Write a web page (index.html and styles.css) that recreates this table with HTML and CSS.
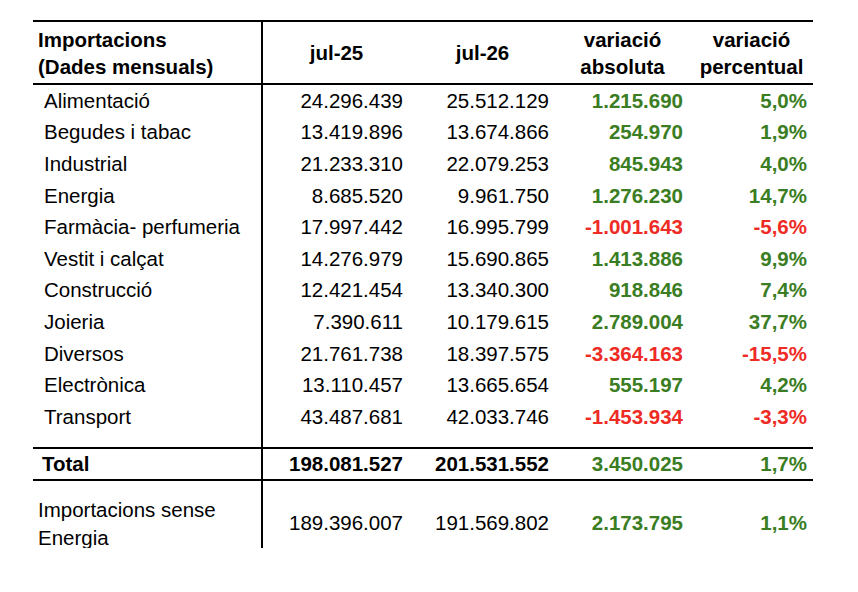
FILE: index.html
```html
<!DOCTYPE html>
<html lang="ca">
<head>
<meta charset="utf-8">
<link rel="stylesheet" href="styles.css">
</head>
<body>
<table class="tbl">
  <colgroup>
    <col class="c1"><col class="c2"><col class="c3"><col class="c4"><col class="c5">
  </colgroup>
  <thead>
    <tr class="head">
      <th class="lab">Importacions<br>(Dades mensuals)</th>
      <th>jul-25</th>
      <th>jul-26</th>
      <th>variació<br>absoluta</th>
      <th>variació<br>percentual</th>
    </tr>
  </thead>
  <tbody>
    <tr class="row"><td class="lab">Alimentació</td><td class="n">24.296.439</td><td class="n">25.512.129</td><td class="n g">1.215.690</td><td class="n g">5,0%</td></tr>
    <tr class="row"><td class="lab">Begudes i tabac</td><td class="n">13.419.896</td><td class="n">13.674.866</td><td class="n g">254.970</td><td class="n g">1,9%</td></tr>
    <tr class="row"><td class="lab">Industrial</td><td class="n">21.233.310</td><td class="n">22.079.253</td><td class="n g">845.943</td><td class="n g">4,0%</td></tr>
    <tr class="row"><td class="lab">Energia</td><td class="n">8.685.520</td><td class="n">9.961.750</td><td class="n g">1.276.230</td><td class="n g">14,7%</td></tr>
    <tr class="row"><td class="lab">Farmàcia- perfumeria</td><td class="n">17.997.442</td><td class="n">16.995.799</td><td class="n r">-1.001.643</td><td class="n r">-5,6%</td></tr>
    <tr class="row"><td class="lab">Vestit i calçat</td><td class="n">14.276.979</td><td class="n">15.690.865</td><td class="n g">1.413.886</td><td class="n g">9,9%</td></tr>
    <tr class="row"><td class="lab">Construcció</td><td class="n">12.421.454</td><td class="n">13.340.300</td><td class="n g">918.846</td><td class="n g">7,4%</td></tr>
    <tr class="row"><td class="lab">Joieria</td><td class="n">7.390.611</td><td class="n">10.179.615</td><td class="n g">2.789.004</td><td class="n g">37,7%</td></tr>
    <tr class="row"><td class="lab">Diversos</td><td class="n">21.761.738</td><td class="n">18.397.575</td><td class="n r">-3.364.163</td><td class="n r">-15,5%</td></tr>
    <tr class="row"><td class="lab">Electrònica</td><td class="n">13.110.457</td><td class="n">13.665.654</td><td class="n g">555.197</td><td class="n g">4,2%</td></tr>
    <tr class="row"><td class="lab">Transport</td><td class="n">43.487.681</td><td class="n">42.033.746</td><td class="n r">-1.453.934</td><td class="n r">-3,3%</td></tr>
    <tr class="spacer"><td class="lab"></td><td></td><td></td><td></td><td></td></tr>
    <tr class="total"><td class="lab">Total</td><td class="n">198.081.527</td><td class="n">201.531.552</td><td class="n g">3.450.025</td><td class="n g">1,7%</td></tr>
    <tr class="last"><td class="lab"><div class="wrap">Importacions sense<br>Energia</div></td><td class="n">189.396.007</td><td class="n">191.569.802</td><td class="n g">2.173.795</td><td class="n g">1,1%</td></tr>
  </tbody>
</table>
</body>
</html>
```
FILE: styles.css
```css
html, body {
  margin: 0;
  padding: 0;
  background: #fff;
}
body {
  font-family: "Liberation Sans", Arial, sans-serif;
  font-size: 20.5px;
  color: #000;
}
.tbl {
  margin: 20px 0 0 33px;
  border-collapse: separate;
  border-spacing: 0;
  table-layout: fixed;
  width: 780px;
}
.c1 { width: 230px; }
.c2 { width: 147px; }
.c3 { width: 145px; }
.c4 { width: 135px; }
.c5 { width: 123px; }

td, th {
  padding: 0;
  white-space: nowrap;
}
.lab {
  border-right: 2px solid #000;
  text-align: left;
}
.head th {
  height: 61px;
  border-top: 2px solid #000;
  border-bottom: 2px solid #000;
  font-weight: bold;
  line-height: 27px;
  text-align: center;
  vertical-align: middle;
}
.head th.lab {
  text-align: left;
  padding-left: 5px;
}
.row td {
  height: 31.6px;
  line-height: 24px;
  vertical-align: middle;
}
.row td.lab {
  padding-left: 11px;
}
.n {
  text-align: right;
  padding-right: 7px;
}
.row td:nth-child(3), .total td:nth-child(3), .last td:nth-child(3),
.row td:nth-child(5), .total td:nth-child(5), .last td:nth-child(5) {
  padding-right: 6px;
}
.g {
  color: #3a7d22;
  font-weight: bold;
}
.r {
  color: #ee2b24;
  font-weight: bold;
}
.spacer td {
  height: 14.4px;
}
.total td {
  height: 30px;
  border-top: 2px solid #000;
  border-bottom: 2px solid #000;
  font-weight: bold;
  line-height: 24px;
  vertical-align: middle;
}
.total td.lab {
  padding-left: 9px;
}
.last td {
  height: 67px;
  box-sizing: border-box;
  line-height: 24px;
  vertical-align: top;
  padding-top: 30px;
}
.last td.lab {
  padding: 0 0 0 5px;
}
.wrap {
  height: 67px;
  box-sizing: border-box;
  padding-top: 15px;
  line-height: 28px;
  overflow: visible;
}
```
